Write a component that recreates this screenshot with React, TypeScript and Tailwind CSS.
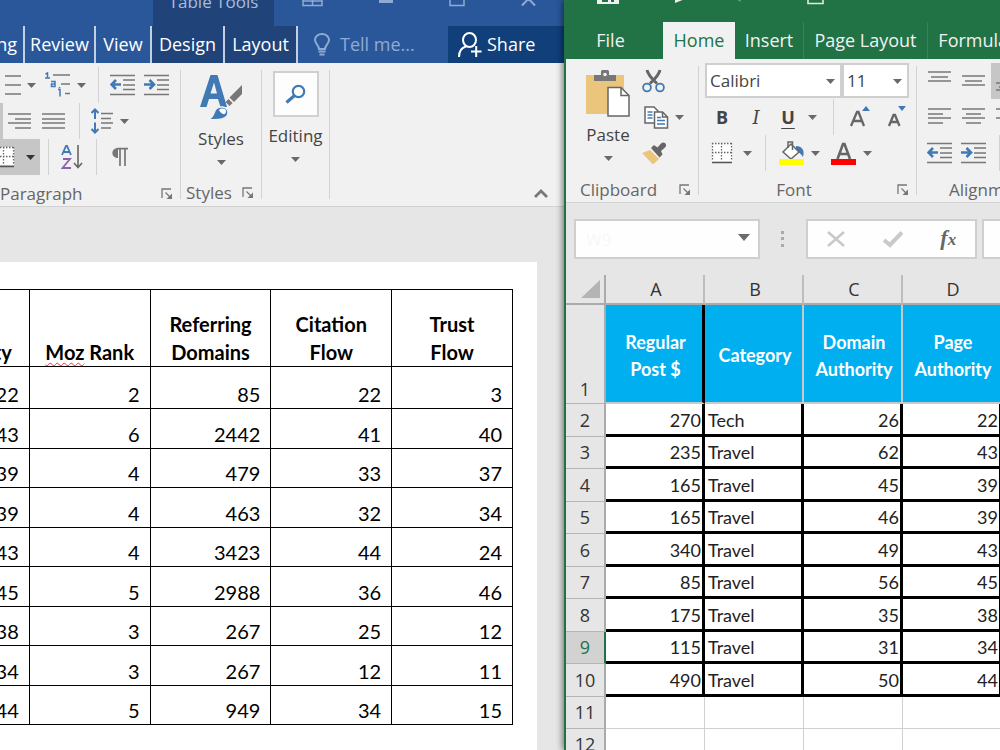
import type { ReactNode } from "react";

const wordRows = [
  { h: "h-[42px]", cells: ["22", "2", "85", "22", "3"] },
  { h: "h-[40px]", cells: ["43", "6", "2442", "41", "40"] },
  { h: "h-[39px]", cells: ["39", "4", "479", "33", "37"] },
  { h: "h-[40px]", cells: ["39", "4", "463", "32", "34"] },
  { h: "h-[39px]", cells: ["43", "4", "3423", "44", "24"] },
  { h: "h-[40px]", cells: ["45", "5", "2988", "36", "46"] },
  { h: "h-[39px]", cells: ["38", "3", "267", "25", "12"] },
  { h: "h-[40px]", cells: ["34", "3", "267", "12", "11"] },
  { h: "h-[39px]", cells: ["44", "5", "949", "34", "15"] },
];

const sheetHeaders = ["Regular Post $", "Category", "Domain Authority", "Page Authority"];

const sheetRows = [
  ["270", "Tech", "26", "22"],
  ["235", "Travel", "62", "43"],
  ["165", "Travel", "45", "39"],
  ["165", "Travel", "46", "39"],
  ["340", "Travel", "49", "43"],
  ["85", "Travel", "56", "45"],
  ["175", "Travel", "35", "38"],
  ["115", "Travel", "31", "34"],
  ["490", "Travel", "50", "44"],
];

const SELECTED_ROW = 9;

/* ---------- small drawings ---------- */

function Caret({ className = "fill-[#6a6a6a]" }: { className?: string }) {
  return (
    <svg width="9" height="5" viewBox="0 0 9 5" className={`shrink-0 ${className}`}>
      <path d="M0 0h9L4.5 5z" />
    </svg>
  );
}

function Launcher() {
  return (
    <svg width="12" height="12" viewBox="0 0 12 12" fill="none" stroke="#777" strokeWidth="1.3">
      <path d="M1 10V1h9M4.500 4.500l5 5" />
      <path d="M11 5.500V11H5.500z" fill="#777" stroke="none" />
    </svg>
  );
}

type Line = [number, number, number];

// each line is x1, x2, y
function Lines({ lines, width = 24, height = 20 }: { lines: Line[]; width?: number; height?: number }) {
  return (
    <svg width={width} height={height} viewBox={`0 0 ${width} ${height}`} stroke="#777" strokeWidth="1.5" className="shrink-0">
      {lines.map(([x1, x2, y]) => (
        <path key={y} d={`M${x1} ${y}H${x2}`} />
      ))}
    </svg>
  );
}

function IndentIcon({ inward = false }: { inward?: boolean }) {
  return (
    <svg width="26" height="22" viewBox="0 0 26 22" fill="none" className="shrink-0">
      <path d="M0 1.500h25M13 6h12M13 11h12M13 15.500h12M0 20.500h25" stroke="#777" strokeWidth="1.500" />
      <path
        d={inward ? "M0 10.500h10M5.500 6l4.500 4.500L5.500 15" : "M11 10.500H1.500M6 6l-4.500 4.500L6 15"}
        stroke="#4179b5"
        strokeWidth="2.600"
      />
    </svg>
  );
}

function BulletsIcon() {
  return <Lines width={16} lines={[[0, 16, 1], [0, 16, 10], [0, 16, 19]]} />;
}

function MultilevelIcon() {
  return (
    <svg width="26" height="26" viewBox="0 0 26 26" fill="none" className="shrink-0">
      <path d="M8 3h17M16 12h9M20 21.500h5" stroke="#777" strokeWidth="1.500" />
      <path d="M0.500 2L2.500 1v5M0 6h5M6 9.500h4v5H6.500v-2.500H10M13 17.500h2v7M14.500 15v1.200" stroke="#4179b5" strokeWidth="1.500" />
    </svg>
  );
}

function LineSpacingIcon() {
  return (
    <svg width="23" height="26" viewBox="0 0 23 26" fill="none" className="shrink-0">
      <path d="M10 5.500h12M10 10.500h10M10 15h12M10 20h10" stroke="#777" strokeWidth="1.500" />
      <path d="M4 11V2M0.500 5L4 1.500 7.500 5M4 14.500v9M0.500 21L4 24.500 7.500 21" stroke="#4179b5" strokeWidth="2" />
    </svg>
  );
}

function BordersIcon() {
  return (
    <svg width="22" height="22" viewBox="0 0 22 22" fill="none" className="shrink-0">
      <path d="M1 1h20v18H1z" fill="#fff" />
      <path d="M1 1.500h20M1 10.500h20M1.500 1v18M10.500 1v18M20.500 1v18" stroke="#666" strokeWidth="1.300" strokeDasharray="1.500 1.500" />
      <path d="M1 20.500h20" stroke="#555" strokeWidth="1.500" />
    </svg>
  );
}

function SortIcon() {
  return (
    <svg width="22" height="26" viewBox="0 0 22 26" fill="none" className="shrink-0">
      <path d="M1 11L5 2h1l4 9M2.500 8h6" stroke="#4179b5" strokeWidth="1.800" />
      <path d="M2 15h7L1.500 24H10" stroke="#8f5fa8" strokeWidth="1.800" />
      <path d="M17 1v22M13 19l4 4.500 4-4.500" stroke="#666" strokeWidth="1.600" />
    </svg>
  );
}

function PilcrowIcon() {
  return (
    <svg width="16" height="20" viewBox="0 0 16 20" className="shrink-0">
      <path d="M6 1C-1.500 1-1.500 11 6 11z" fill="#777" />
      <path d="M5 1.700h11M8 1.500V19M13 1.500V19" stroke="#777" strokeWidth="1.700" />
    </svg>
  );
}

function StylesIcon() {
  return (
    <svg width="44" height="48" viewBox="0 0 44 48" fill="none">
      <path d="M1 34L11.500 2h7L28 34h-6.500l-2.500-8h-9L7.500 34zM11.500 20.500h6.500L15 9.500z" fill="#4179b5" fillRule="evenodd" />
      <path d="M8 46.500c5-1 6-4 8-9 3-5.500 13-4.500 13 2 0 7-9 8-21 7z" fill="#4179b5" stroke="#f1f1f1" strokeWidth="1.500" />
      <path d="M20 37c3-3 8-1 7 2-1 4-5 2-7-2z" fill="#fff" />
      <path d="M43 12v9l-8 8-4.500-4.500z" fill="#777" />
      <path d="M29.500 26l4 4-3 3-4-4z" fill="#777" />
    </svg>
  );
}

function FindIcon() {
  return (
    <svg width="21" height="20" viewBox="0 0 21 20" fill="none" stroke="#4179b5">
      <circle cx="13.500" cy="7.500" r="5.700" strokeWidth="2.200" />
      <path d="M9.500 11.500L1.500 18.500" strokeWidth="3.200" />
    </svg>
  );
}

function BulbIcon() {
  return (
    <svg width="16" height="23" viewBox="0 0 16 23" fill="none" stroke="#8fabd3" strokeWidth="2">
      <path d="M5 16c0-4-4-5-4-9.200C1 3.500 4 1 8 1s7 2.500 7 5.800C15 11 11 12 11 16z" />
      <path d="M4.500 18.500h7M5.500 21.500h5" />
    </svg>
  );
}

function ShareIcon() {
  return (
    <svg width="24" height="26" viewBox="0 0 24 26" fill="none" stroke="#fff" strokeWidth="2">
      <ellipse cx="11.500" cy="8" rx="6.500" ry="7" />
      <path d="M1 25c0-6 3-9.500 7-10.500M13 19.500h10.500M18.200 14v11" />
    </svg>
  );
}

function PasteIcon() {
  return (
    <svg width="44" height="48" viewBox="0 0 44 48">
      <path d="M0 6h38v39H0z" fill="#ecc57c" />
      <path d="M8 12V6h7V2.500C15 1.500 16 1 17 1h4c1 0 2 .5 2 1.500V6h7v6z" fill="#777" />
      <circle cx="19" cy="5.500" r="1.800" fill="#f1f1f1" />
      <path d="M22 18.500h13l8 8V47H22z" fill="#fff" stroke="#666" strokeWidth="1.500" />
      <path d="M35 18.500v8h8" fill="none" stroke="#666" strokeWidth="1.500" />
    </svg>
  );
}

function CutIcon() {
  return (
    <svg width="24" height="24" viewBox="0 0 24 24" fill="none">
      <path d="M5 1c1 5 5 9 10 13.500M18 1c-1 5-5 9-10 13.500" stroke="#666" strokeWidth="3" />
      <circle cx="5" cy="18.500" r="3.900" stroke="#4179b5" strokeWidth="1.800" />
      <circle cx="18" cy="18.500" r="3.900" stroke="#4179b5" strokeWidth="1.800" />
    </svg>
  );
}

function CopyIcon() {
  return (
    <svg width="25" height="23" viewBox="0 0 25 23" strokeWidth="1.500">
      <path d="M1 1h9l4 4v12H1z" fill="#fff" stroke="#666" />
      <path d="M3.500 6h5M3.500 9h5M3.500 12h5" stroke="#4179b5" />
      <path d="M10.500 6h8l5 5v11h-13z" fill="#fff" stroke="#666" />
      <path d="M18.500 6v5h5" fill="none" stroke="#666" />
      <path d="M13 11.500h4M13 14.500h8M13 18h8" stroke="#4179b5" />
    </svg>
  );
}

function PainterIcon() {
  return (
    <svg width="26" height="24" viewBox="0 0 26 24">
      <path d="M1 12l8-3 9 9-6 5.500z" fill="#ecc57c" />
      <path d="M10 7l3-3 3.500 2.500L20 2.500c3-3 7 1 4 4L20 10l1.500 3.500-3 3z" fill="#666" />
    </svg>
  );
}

function FillIcon() {
  return (
    <svg width="26" height="26" viewBox="0 0 26 26" fill="none">
      <path d="M17 6c6 0 9 4 7 11-2-3-4-5-7-6z" fill="#4179b5" />
      <path d="M4 12l8-8 8 8-8 7z" fill="#fff" stroke="#666" strokeWidth="1.500" />
      <path d="M9 8V2h4.500v8" stroke="#666" strokeWidth="1.500" />
      <path d="M0 19h25v6H0z" fill="#ff0" />
    </svg>
  );
}

function FontColorIcon() {
  return (
    <svg width="26" height="26" viewBox="0 0 26 26" fill="none">
      <path d="M6.500 19L12 4h1.500L19 19M9 14h7.500" stroke="#666" strokeWidth="2.600" />
      <path d="M0 19h25v6H0z" fill="#fe0000" />
    </svg>
  );
}

function ResizeFontIcon({ grow = false }: { grow?: boolean }) {
  return (
    <svg width="22" height="24" viewBox="0 0 22 24" fill="none">
      <path
        d={grow ? "M2 21L8 7h1.500l5.500 14M4.500 16h8.500" : "M4 21L8.500 10h1.500L14.500 21M6 17h6.500"}
        stroke="#666"
        strokeWidth="2.300"
      />
      <path d={grow ? "M13 6h8l-4-5z" : "M13 1h8l-4 5z"} fill="#4179b5" />
    </svg>
  );
}

/* ---------- shared ribbon parts ---------- */

function Tool({ label, className = "w-[34px]", children }: { label: string; className?: string; children: ReactNode }) {
  return (
    <button type="button" aria-label={label} className={`flex h-9 shrink-0 items-center justify-center gap-[6px] ${className}`}>
      {children}
    </button>
  );
}

function ToolDivider() {
  return (
    <div className="flex h-9 w-4 shrink-0 justify-center">
      <div className="w-px bg-[#d2d2d2]" />
    </div>
  );
}

function Group({
  label,
  width,
  footer = "",
  launcher = true,
  children,
}: {
  label: string;
  width: string;
  footer?: string;
  launcher?: boolean;
  children: ReactNode;
}) {
  return (
    <>
      <section className={`flex shrink-0 flex-col pt-1 ${width}`}>
        <div className="h-[108px]">{children}</div>
        <div className={`flex h-8 items-center justify-between pt-[6px] pr-[7px] text-[17px] text-[#666] ${footer}`}>
          <span className="flex-1">{label}</span>
          {launcher && (
            <button type="button" aria-label={`${label} settings`} className="pl-2">
              <Launcher />
            </button>
          )}
        </div>
      </section>
      <div className="my-[7px] w-px shrink-0 bg-[#d2d2d2]" />
    </>
  );
}

function BigButton({ label, icon, boxed = false }: { label: string; icon: ReactNode; boxed?: boolean }) {
  return (
    <button type="button" className={`flex flex-col items-center text-[17px] text-[#444] ${boxed ? "pt-[3px]" : "pt-[6px]"}`}>
      <span className="flex h-12 items-center">{icon}</span>
      <span className="leading-9">{label}</span>
      <span className="pt-[3px]">
        <Caret />
      </span>
    </button>
  );
}

/* ---------- Word ---------- */

function WordWindow() {
  const tab = "flex shrink-0 items-center justify-center border-r-2 border-[#c3d0e4]";
  return (
    <div className="flex w-[56.4%] shrink-0 flex-col overflow-hidden bg-[#e6e6e6]">
      <div className="-mt-[22px] flex h-12 shrink-0 bg-[#2a579a] text-[#a9bddb]">
        <div className="w-[153px] shrink-0" />
        <div className="flex w-[121px] shrink-0 items-center justify-center bg-[#204379] text-[17px]">Table Tools</div>
        <div className="flex flex-1 items-center justify-between pr-7 pl-7">
          <svg width="21" height="20" viewBox="0 0 21 20" fill="none" stroke="#8fabd3" strokeWidth="1.500">
            <path d="M1 1h19v12.500H1zM1 9h19M10.500 7v6" />
          </svg>
          <svg width="14" height="20" viewBox="0 0 14 20">
            <path d="M0 8h14v3H0z" fill="#8fabd3" />
          </svg>
          <svg width="16" height="20" viewBox="0 0 16 20" fill="none" stroke="#8fabd3" strokeWidth="1.500">
            <path d="M1 1h14v12.500H1z" />
          </svg>
          <svg width="15" height="20" viewBox="0 0 15 20" fill="none" stroke="#8fabd3" strokeWidth="2">
            <path d="M1 0l13 13.500M14 0L1 13.500" />
          </svg>
        </div>
      </div>

      <nav className="flex h-[37px] shrink-0 bg-[#2a579a] text-[18px] text-white">
        <button type="button" className="flex w-[25px] shrink-0 items-center justify-end overflow-hidden border-r-2 border-[#c3d0e4] pr-[6px]">
          Mailing
        </button>
        <button type="button" className={`w-[71px] ${tab}`}>Review</button>
        <button type="button" className={`w-[56px] ${tab}`}>View</button>
        <button type="button" className={`w-[73px] bg-[#204379] ${tab}`}>Design</button>
        <button type="button" className={`w-[73px] bg-[#204379] ${tab}`}>Layout</button>
        <button type="button" className="flex flex-1 items-center gap-[10px] pl-4 text-[#8fabd3]">
          <BulbIcon />
          Tell me...
        </button>
        <button type="button" className="flex w-[116px] shrink-0 items-center gap-[5px] bg-[#103f7a] pl-[10px]">
          <ShareIcon />
          Share
        </button>
      </nav>

      <div className="flex h-36 shrink-0 border-b border-[#d2d2d2] bg-[#f1f1f1]">
        <Group label="Paragraph" width="w-[180px]">
          <div className="flex">
            <Tool label="Bullets" className="w-10">
              <BulletsIcon />
              <Caret />
            </Tool>
            <Tool label="Multilevel list" className="w-[50px]">
              <MultilevelIcon />
              <Caret />
            </Tool>
            <ToolDivider />
            <Tool label="Decrease indent">
              <IndentIcon />
            </Tool>
            <Tool label="Increase indent">
              <IndentIcon inward />
            </Tool>
          </div>
          <div className="flex">
            <div className="w-[3px] bg-[#c6c6c6]" />
            <Tool label="Align right">
              <Lines lines={[[0, 23, 3], [7, 23, 8], [0, 23, 12], [7, 23, 17]]} />
            </Tool>
            <Tool label="Justify">
              <Lines lines={[[0, 23, 3], [0, 23, 8], [0, 23, 12], [0, 23, 17]]} />
            </Tool>
            <ToolDivider />
            <Tool label="Line spacing" className="w-[46px]">
              <LineSpacingIcon />
              <Caret />
            </Tool>
          </div>
          <div className="flex">
            <Tool label="Borders" className="w-10 justify-end overflow-hidden bg-[#c6c6c6] pr-[5px]">
              <span className="flex w-[20px] shrink-0 justify-end">
                <BordersIcon />
              </span>
              <span className="pl-[5px]">
                <Caret className="fill-[#333]" />
              </span>
            </Tool>
            <ToolDivider />
            <Tool label="Sort" className="w-8">
              <SortIcon />
            </Tool>
            <ToolDivider />
            <Tool label="Show marks" className="w-8">
              <PilcrowIcon />
            </Tool>
          </div>
        </Group>
        <Group label="Styles" width="w-[80px]" footer="pl-[5px]">
          <div className="flex justify-center">
            <BigButton label="Styles" icon={<StylesIcon />} />
          </div>
        </Group>
        <Group label="" width="w-[67px]" launcher={false}>
          <div className="flex justify-center">
            <BigButton
              boxed
              label="Editing"
              icon={
                <span className="flex h-[46px] w-[46px] items-center justify-center border-2 border-[#d0d0d0] bg-[#fdfdfd]">
                  <FindIcon />
                </span>
              }
            />
          </div>
        </Group>
        <div className="flex flex-1 items-end justify-end pr-4 pb-2">
          <button type="button" aria-label="Collapse the ribbon">
            <svg width="14" height="9" viewBox="0 0 14 9" fill="none" stroke="#777" strokeWidth="2.800">
              <path d="M1 8l6-6 6 6" />
            </svg>
          </button>
        </div>
      </div>

      <div className="mt-[55px] mr-[27px] flex flex-1 justify-end bg-white pt-[27px] pr-6">
        <table className="h-fit w-[605px] shrink-0 table-fixed border-collapse font-[Lato,sans-serif] text-[20px] leading-7 text-black">
          <thead>
            <tr className="h-[77px]">
              {["Page Authority", "Moz Rank", "Referring Domains", "Citation Flow", "Trust Flow"].map((h) => (
                <th key={h} className="border border-black px-3 align-bottom font-bold whitespace-nowrap">
                  {h === "Moz Rank" ? (
                    <>
                      <span className="underline decoration-red-500 decoration-wavy decoration-1 underline-offset-2">Moz</span> Rank
                    </>
                  ) : (
                    h.split(" ").map((word) => (
                      <span key={word} className="block">
                        {word}
                      </span>
                    ))
                  )}
                </th>
              ))}
            </tr>
          </thead>
          <tbody>
            {wordRows.map((row, r) => (
              <tr key={r} className={row.h}>
                {row.cells.map((cell, c) => (
                  <td key={c} className="border border-black pr-[10px] text-right align-bottom">
                    {cell}
                  </td>
                ))}
              </tr>
            ))}
          </tbody>
        </table>
      </div>
    </div>
  );
}

/* ---------- Excel ---------- */

function Combo({ label, value, width }: { label: string; value: string; width: string }) {
  return (
    <div className={`relative ${width}`}>
      <select
        aria-label={label}
        defaultValue={value}
        className="h-[35px] w-full appearance-none border-2 border-[#cfcfcf] bg-white pl-[3px] text-[17px] text-[#444]"
      >
        <option>{value}</option>
      </select>
      <span className="pointer-events-none absolute inset-y-0 right-[7px] flex items-center">
        <Caret />
      </span>
    </div>
  );
}

function ExcelRibbon() {
  return (
    <div className="flex h-36 shrink-0 overflow-hidden border-b border-[#d2d2d2] bg-[#f1f1f1]">
      <Group label="Clipboard" width="w-[132px]" footer="pl-[14px]">
        <div className="flex gap-2 pl-5">
          <BigButton label="Paste" icon={<PasteIcon />} />
          <div>
            <Tool label="Cut" className="w-8">
              <CutIcon />
            </Tool>
            <Tool label="Copy" className="w-[52px]">
              <CopyIcon />
              <Caret />
            </Tool>
            <Tool label="Format painter" className="w-8">
              <PainterIcon />
            </Tool>
          </div>
        </div>
      </Group>
      <Group label="Font" width="w-[217px]" footer="text-center">
        <div className="pl-[6px]">
          <div className="flex h-9">
            <Combo label="Font" value="Calibri" width="w-[137px]" />
            <Combo label="Font size" value="11" width="w-[67px]" />
          </div>
          <div className="flex font-['Open_Sans',sans-serif] text-[18px] text-[#444]">
            <Tool label="Bold">
              <b>B</b>
            </Tool>
            <Tool label="Italic">
              <i className="font-['DejaVu_Serif',serif]">I</i>
            </Tool>
            <Tool label="Underline" className="w-[52px]">
              <u className="font-bold underline-offset-4">U</u>
              <span className="pl-[7px]">
                <Caret />
              </span>
            </Tool>
            <ToolDivider />
            <Tool label="Grow font" className="w-[38px]">
              <ResizeFontIcon grow />
            </Tool>
            <Tool label="Shrink font">
              <ResizeFontIcon />
            </Tool>
          </div>
          <div className="flex">
            <Tool label="Borders" className="w-[52px]">
              <BordersIcon />
              <span className="pl-1">
                <Caret />
              </span>
            </Tool>
            <ToolDivider />
            <Tool label="Fill color" className="w-[52px]">
              <FillIcon />
              <Caret />
            </Tool>
            <Tool label="Font color" className="w-[52px]">
              <FontColorIcon />
              <Caret />
            </Tool>
          </div>
        </div>
      </Group>
      <Group label="Alignment" width="w-[146px]" footer="pl-8" launcher={false}>
        <div className="pl-[6px]">
          <div className="flex">
            <Tool label="Top align">
              <Lines lines={[[0, 23, 1], [3, 20, 6], [0, 23, 10]]} />
            </Tool>
            <Tool label="Middle align">
              <Lines lines={[[0, 23, 5], [3, 20, 10], [0, 23, 14]]} />
            </Tool>
            <Tool label="Bottom align" className="w-[34px] bg-[#c6c6c6]">
              <Lines lines={[[0, 23, 12], [3, 20, 16], [0, 23, 19]]} />
            </Tool>
          </div>
          <div className="flex">
            <Tool label="Align left">
              <Lines lines={[[0, 23, 2], [0, 15, 7], [0, 23, 11], [0, 15, 16]]} />
            </Tool>
            <Tool label="Center">
              <Lines lines={[[0, 23, 2], [4, 19, 7], [0, 23, 11], [4, 19, 16]]} />
            </Tool>
            <Tool label="Align right">
              <Lines lines={[[0, 23, 2], [7, 23, 7], [0, 23, 11], [7, 23, 16]]} />
            </Tool>
          </div>
          <div className="flex">
            <Tool label="Decrease indent">
              <IndentIcon />
            </Tool>
            <Tool label="Increase indent">
              <IndentIcon inward />
            </Tool>
            <ToolDivider />
          </div>
        </div>
      </Group>
    </div>
  );
}

function FormulaBar() {
  return (
    <div className="flex h-[72px] shrink-0 pt-4 pl-2">
      <div className="relative w-[186px] shrink-0">
        <input
          aria-label="Name box"
          defaultValue="W9"
          className="h-10 w-full border-2 border-[#cfcfcf] bg-[#fefefe] pl-[10px] text-[17px] text-[#f8f8f8]"
        />
        <span className="pointer-events-none absolute top-0 right-[10px] flex h-9 items-center">
          <svg width="12" height="7" viewBox="0 0 12 7" fill="#6a6a6a">
            <path d="M0 0h12L6 7z" />
          </svg>
        </span>
      </div>
      <svg width="46" height="40" viewBox="0 0 46 40" fill="#aaa" className="shrink-0">
        <path d="M21 12h3v3h-3zM21 18h3v3h-3zM21 25h3v3h-3z" />
      </svg>
      <div className="flex h-10 w-[171px] shrink-0 items-center justify-around border-2 border-[#cfcfcf] bg-[#fefefe]">
        <button type="button" aria-label="Cancel">
          <svg width="18" height="16" viewBox="0 0 18 16" fill="none" stroke="#c9c9c9" strokeWidth="2.600">
            <path d="M1 1l16 14M17 1L1 15" />
          </svg>
        </button>
        <button type="button" aria-label="Enter">
          <svg width="20" height="17" viewBox="0 0 20 17" fill="none" stroke="#c9c9c9" strokeWidth="4">
            <path d="M1 9l6 5L19 1.500" />
          </svg>
        </button>
        <button type="button" className="font-['Liberation_Serif',serif] text-[22px] leading-7 font-bold text-[#666] italic">
          f<span className="text-[17px]">x</span>
        </button>
      </div>
      <input aria-label="Formula" className="ml-[5px] h-10 min-w-0 flex-1 border-2 border-r-0 border-[#cfcfcf] bg-[#fefefe]" />
    </div>
  );
}

function Sheet() {
  const rowHead = "border-r-2 border-b border-b-[#b5b5b5] text-center font-['Open_Sans',sans-serif] text-[18px] font-normal";
  return (
    <table className="w-[436px] shrink-0 table-fixed border-separate border-spacing-0 text-[18px] leading-[27px]">
      <colgroup>
        <col className="w-10" />
        <col className="w-[99px]" />
        <col className="w-[99px]" />
        <col className="w-[99px]" />
        <col className="w-[99px]" />
      </colgroup>
      <thead>
        <tr className="h-[30px] bg-[#e6e6e6] text-[#333]">
          <th className="border-r-2 border-b-2 border-[#ababab]">
            <svg width="19" height="19" viewBox="0 0 19 19" className="ml-auto mr-1">
              <path d="M19 0v18H0z" fill="#b4b4b4" />
            </svg>
          </th>
          {["A", "B", "C", "D"].map((c) => (
            <th key={c} className="border-r-2 border-b-2 border-r-[#bdbdbd] border-b-[#ababab] pl-[3px] text-center font-['Open_Sans',sans-serif] font-normal">
              {c}
            </th>
          ))}
        </tr>
      </thead>
      <tbody className="bg-white font-[Lato,sans-serif] text-[#222]">
        <tr className="h-[99px]">
          <th className={`border-r-[#ababab] bg-[#e6e6e6] align-bottom text-[#333] ${rowHead}`}>1</th>
          {sheetHeaders.map((h, i) => (
            <td
              key={h}
              className={`border-b-2 border-b-[#c9c9c9] bg-[#00aff0] pt-1 pl-[3px] text-center font-bold text-white ${
                i === 0 ? "border-r-[3px] border-r-black" : "border-r-2 border-r-[#c9c9c9]"
              }`}
            >
              {h.split(/ (?=Authority|Post|\$)/).length > 1 && h !== "Regular Post $"
                ? h.split(" ").map((line) => (
                    <span key={line} className="block">
                      {line}
                    </span>
                  ))
                : h === "Regular Post $"
                  ? ["Regular", "Post $"].map((line) => (
                      <span key={line} className="block">
                        {line}
                      </span>
                    ))
                  : h}
            </td>
          ))}
        </tr>
        {sheetRows.map((row, r) => {
          const n = r + 2;
          const selected = n === SELECTED_ROW;
          return (
            <tr key={n} className={r % 2 === 0 ? "h-[33px]" : "h-[32px]"}>
              <th
                className={`${rowHead} ${
                  selected ? "border-r-[#217346] bg-[#d2d2d2] text-[#217346]" : "border-r-[#ababab] bg-[#e6e6e6] text-[#333]"
                }`}
              >
                {n}
              </th>
              {row.map((cell, c) => (
                <td
                  key={c}
                  className={`border-r-[3px] border-b-[3px] border-black pt-[2px] ${c === 1 ? "pl-[3px] text-left" : "pr-px text-right"}`}
                >
                  {cell}
                </td>
              ))}
            </tr>
          );
        })}
        {[11, 12].map((n) => (
          <tr key={n} className="h-8">
            <th className={`border-r-[#ababab] bg-[#e6e6e6] text-[#333] ${rowHead}`}>{n}</th>
            {["A", "B", "C", "D"].map((c) => (
              <td key={c} className="border-r border-b border-[#d0d0d0]" />
            ))}
          </tr>
        ))}
      </tbody>
    </table>
  );
}

function ExcelWindow() {
  const tab = "flex shrink-0 items-center justify-center border-r border-[#3a8058]";
  return (
    <div className="relative z-10 flex min-w-0 flex-1 flex-col overflow-hidden border-l-2 border-[#217346] bg-[#e6e6e6] shadow-[-2px_0_6px_rgba(0,0,0,0.45)]">
      <div className="-mt-[22px] flex h-11 shrink-0 items-center bg-[#217346] pl-[31px]">
        <svg width="22" height="20" viewBox="0 0 22 20">
          <path d="M0 0h22v14H0z" fill="#f1f1f1" />
          <path d="M5 7h12v5h-3V9h-3v3H5z" fill="#217346" />
        </svg>
        <svg width="60" height="20" viewBox="0 0 60 20" className="ml-[56px]">
          <path d="M0 0h10v9L0 13z" fill="#f1f1f1" />
        </svg>
        <svg width="16" height="20" viewBox="0 0 16 20">
          <path d="M0 9l6 3V5z" fill="#5d9a78" />
        </svg>
        <svg width="17" height="20" viewBox="0 0 17 20" fill="none" stroke="#dfeae4" strokeWidth="1.600" className="ml-[56px]">
          <path d="M1 1h15v12.500H1z" />
        </svg>
      </div>
      <nav className="flex h-[37px] shrink-0 bg-[#217346] text-[18px] text-[#f1f1f1]">
        <button type="button" className="flex w-[97px] shrink-0 items-center justify-center pr-2">File</button>
        <button type="button" className="flex w-[72px] shrink-0 items-center justify-center bg-[#f1f1f1] text-[#217346]">Home</button>
        <button type="button" className={`w-[69px] ${tab}`}>Insert</button>
        <button type="button" className={`w-[124px] ${tab}`}>Page Layout</button>
        <button type="button" className={`w-[100px] ${tab}`}>Formulas</button>
      </nav>
      <ExcelRibbon />
      <FormulaBar />
      <Sheet />
    </div>
  );
}

export default function App() {
  return (
    <main className="flex h-screen overflow-hidden font-['Open_Sans',sans-serif]">
      <WordWindow />
      <ExcelWindow />
    </main>
  );
}
